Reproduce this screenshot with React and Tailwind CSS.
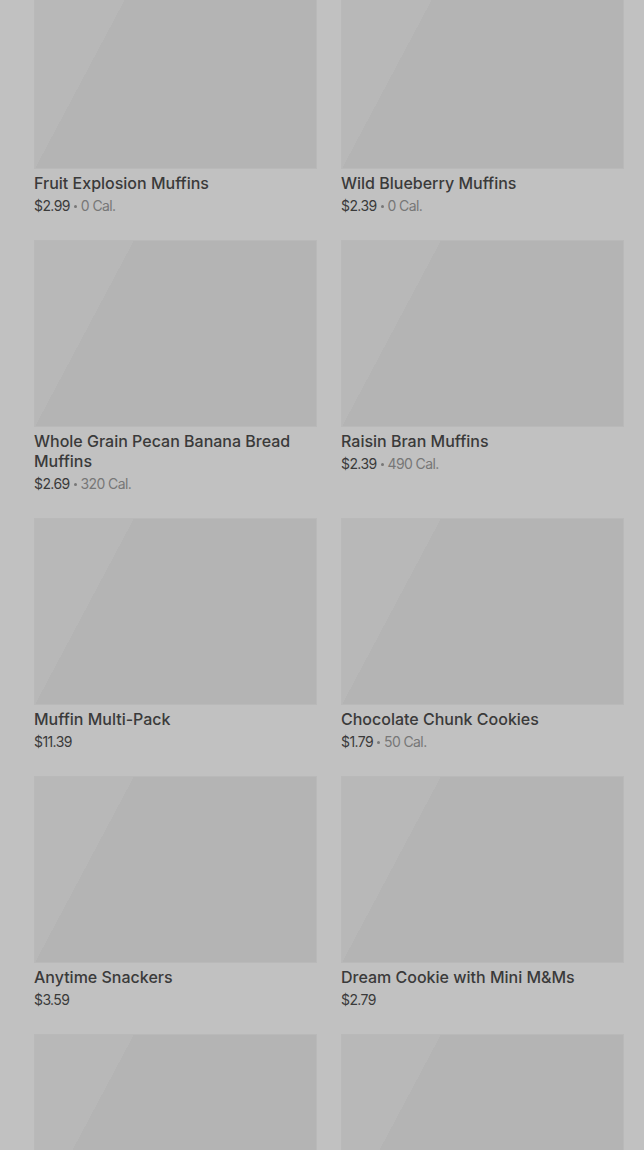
const items = [
  { name: 'Fruit Explosion Muffins', price: '$2.99', cal: '0 Cal.' },
  { name: 'Wild Blueberry Muffins', price: '$2.39', cal: '0 Cal.' },
  { name: 'Whole Grain Pecan Banana Bread Muffins', price: '$2.69', cal: '320 Cal.' },
  { name: 'Raisin Bran Muffins', price: '$2.39', cal: '490 Cal.' },
  { name: 'Muffin Multi-Pack', price: '$11.39' },
  { name: 'Chocolate Chunk Cookies', price: '$1.79', cal: '50 Cal.' },
  { name: 'Anytime Snackers', price: '$3.59' },
  { name: 'Dream Cookie with Mini M&Ms', price: '$2.79' },
  { name: '', price: '' },
  { name: '', price: '' },
];

function Card({ item }) {
  return (
    <div className="flex flex-col">
      <div className="h-[187px] border border-[#b9b9b9] bg-[linear-gradient(118deg,#b8b8b8_26%,#b4b4b4_26%)]" />
      <div className="mt-[4px] text-[16px] leading-[20px] font-medium text-[#3a3a3a]">{item.name}</div>
      <div className="mt-[3px] h-[20px] flex items-center text-[14px] leading-[20px] text-[#3a3a3a] tracking-[-0.6px]">
        <span>{item.price}</span>
        {item.cal && (
          <>
            <span className="mx-[4px] w-[3px] h-[3px] rounded-full bg-[#777]" />
            <span className="text-[#777]">{item.cal}</span>
          </>
        )}
      </div>
    </div>
  );
}

export default function App() {
  return (
    <div className="h-[1150px] overflow-hidden bg-[#c1c1c1] font-['Inter',sans-serif]">
      <div className="-mt-[18px] pl-[34px] pr-[20px] grid grid-cols-2 gap-x-[24px] gap-y-[24px]">
        {items.map((it, i) => <Card key={i} item={it} />)}
      </div>
    </div>
  );
}
